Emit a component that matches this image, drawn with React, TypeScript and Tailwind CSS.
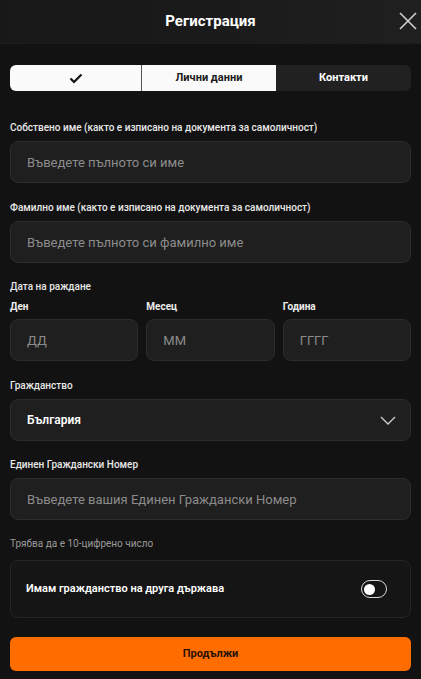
import { useState } from 'react';

const font = { fontFamily: 'Roboto, "Noto Sans", sans-serif' };

interface IFieldProps {
  label: string;
  placeholder: string;
}

const TextField = ({ label, placeholder }: IFieldProps) => {
  return (
    <div className="flex flex-col">
      <label className="text-[10px] font-medium text-[#e8e8e8] h-[14px] leading-[14px]">
        {label}
      </label>
      <input
        className="mt-[6px] h-[42px] w-full rounded-lg border border-[#2c2c2c] bg-[#1f1f1f] px-4 text-[13px] text-white outline-none placeholder:text-[#8c8c8c]"
        placeholder={placeholder}
      />
    </div>
  );
};

const DateBox = ({ label, placeholder }: IFieldProps) => (
  <div className="flex flex-1 flex-col">
    <span className="text-[10px] font-bold text-[#ededed] leading-[14px]">
      {label}
    </span>
    <input
      className="mt-[5px] h-[42px] w-full rounded-lg border border-[#2c2c2c] bg-[#1f1f1f] px-4 text-[13px] text-white outline-none placeholder:text-[#8c8c8c]"
      placeholder={placeholder}
    />
  </div>
);

const App = () => {
  const [other, setOther] = useState<boolean>(false);

  return (
    <div className="min-h-[679px] w-[421px] bg-[#121212]" style={font}>
      {/* header */}
      <div className="relative flex h-[44px] items-center justify-center border-b border-[#1c1c1c] bg-gradient-to-r from-[#181818] via-[#1a1a1a] to-[#202020]">
        <h1 className="text-[15px] font-bold text-white">Регистрация</h1>
        <button className="absolute right-[4px] top-[12px] text-[#d8d8d8]">
          <svg width="18" height="18" viewBox="0 0 18 18" fill="none">
            <path d="M1 1L17 17M17 1L1 17" stroke="currentColor" strokeWidth="1.5" />
          </svg>
        </button>
      </div>

      <div className="px-[10px]">
        {/* steps */}
        <div className="mt-[21px] flex h-[26px] overflow-hidden rounded-md bg-[#212121]">
          <div className="flex w-[132px] items-center justify-center border-r border-[#555] bg-[#fafafa]">
            <svg width="14" height="11" viewBox="0 0 14 11" fill="none">
              <path d="M1.5 5.5L5 9L12.5 1.5" stroke="#111" strokeWidth="2.2" />
            </svg>
          </div>
          <div className="flex w-[134px] items-center justify-center bg-[#fafafa] text-[11px] font-bold text-[#1a1a1a]">
            Лични данни
          </div>
          <div className="flex flex-1 items-center justify-center text-[11px] font-bold text-white">
            Контакти
          </div>
        </div>

        {/* form */}
        <form className="mt-[30px] flex flex-col" onSubmit={(e) => e.preventDefault()}>
          <TextField
            label="Собствено име (както е изписано на документа за самоличност)"
            placeholder="Въведете пълното си име"
          />
          <div className="mt-[18px]">
            <TextField
              label="Фамилно име (както е изписано на документа за самоличност)"
              placeholder="Въведете пълното си фамилно име"
            />
          </div>

          <span className="mt-[17px] text-[10px] font-medium text-[#e8e8e8] leading-[14px]">
            Дата на раждане
          </span>
          <div className="mt-[6px] flex gap-2">
            <DateBox label="Ден" placeholder="ДД" />
            <DateBox label="Месец" placeholder="ММ" />
            <DateBox label="Година" placeholder="ГГГГ" />
          </div>

          <span className="mt-[18px] text-[10px] font-medium text-[#e8e8e8] leading-[14px]">
            Гражданство
          </span>
          <div className="mt-[6px] flex h-[42px] items-center justify-between rounded-lg border border-[#2c2c2c] bg-[#1f1f1f] pl-4 pr-[14px]">
            <span className="text-[12px] font-semibold text-white">България</span>
            <svg width="16" height="9" viewBox="0 0 16 9" fill="none">
              <path d="M1 1L8 8L15 1" stroke="#d0d0d0" strokeWidth="1.3" />
            </svg>
          </div>

          <div className="mt-[17px]">
            <TextField
              label="Единен Граждански Номер"
              placeholder="Въведете вашия Единен Граждански Номер"
            />
          </div>
          <span className="mt-[17px] text-[10px] text-[#9a9a9a] leading-[14px]">
            Трябва да е 10-цифрено число
          </span>

          <div className="mt-[9px] flex h-[58px] items-center justify-between rounded-lg border border-[#262626] bg-[#151515] pl-[15px] pr-[23px]">
            <span className="text-[11px] font-semibold text-white">
              Имам гражданство на друга държава
            </span>
            <button
              type="button"
              onClick={() => setOther(!other)}
              className={`flex h-[18px] w-[26px] items-center rounded-full border-[1.5px] border-[#d8d8d8] px-[2px] ${
                other ? 'justify-end bg-[#ff6e00]' : 'justify-start bg-transparent'
              }`}
            >
              <span className="h-[11px] w-[11px] rounded-full bg-white" />
            </button>
          </div>

          <button
            type="submit"
            className="mt-[19px] h-[34px] w-full rounded-md bg-[#ff6d00] text-[11px] font-bold text-[#2a1204]"
          >
            Продължи
          </button>
        </form>
      </div>
    </div>
  );
};

export default App;
